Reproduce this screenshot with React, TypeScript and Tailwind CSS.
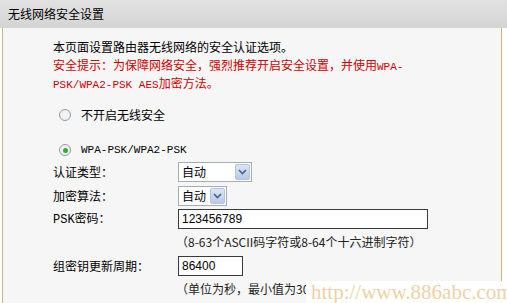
import React from 'react';

const cjk = { fontFamily: '"Noto Sans CJK SC", "Liberation Sans", sans-serif' };
const mono = { fontFamily: '"Liberation Mono", "Noto Sans CJK SC", monospace' };

const Radio: React.FC<{ checked?: boolean }> = ({ checked }) => (
  <span className="w-[12px] h-[12px] rounded-full border border-[#8c9aa8] bg-[#f2f2f2] flex items-center justify-center shrink-0">
    {checked && <span className="w-[5px] h-[5px] rounded-full bg-[#3fa63f]" />}
  </span>
);

const Select: React.FC<{ width: string }> = ({ width }) => (
  <div className={`${width} h-[20px] bg-white border border-[#a5acb5] flex items-stretch`}>
    <span className="flex-1 pl-[3px] text-[12px] leading-[18px] text-black" style={cjk}>自动</span>
    <span className="w-[15px] m-[1px] rounded-[2px] bg-gradient-to-b from-[#dbe6f6] to-[#b7c9e6] border border-[#b1c3de] flex items-center justify-center">
      <svg width="9" height="6" viewBox="0 0 9 6">
        <path d="M1 1 L4.5 4.5 L8 1" stroke="#4d6185" strokeWidth="1.6" fill="none" />
      </svg>
    </span>
  </div>
);

const Input: React.FC<{ width: string; value: string }> = ({ width, value }) => (
  <div className={`${width} h-[20px] bg-white border border-[#3a3a3a] pl-[3px] text-[12px] leading-[18px] text-black`} style={{ fontFamily: '"Liberation Sans", sans-serif' }}>
    {value}
  </div>
);

const App: React.FC = () => {
  return (
    <div className="w-[507px] h-[303px] bg-white relative overflow-hidden text-[12px] text-black" style={cjk}>
      {/* Title bar */}
      <div className="h-[28px] bg-gradient-to-b from-[#e2e2e2] to-[#d4d4d4] flex items-center pl-[8px] text-[12px] text-black">
        无线网络安全设置
      </div>

      {/* Body */}
      <div className="ml-[2px] mr-[5px] h-[275px] border-l border-r border-[#cdb774] bg-[#f6f6f6] pl-[50px] pt-[10px] flex flex-col">
        <div className="h-[18px] leading-[18px]">本页面设置路由器无线网络的安全认证选项。</div>
        <div className="h-[18px] leading-[18px] text-[#d00000]">
          安全提示：为保障网络安全，强烈推荐开启安全设置，并使用<span style={mono} className="text-[11px]">WPA-</span>
        </div>
        <div className="h-[18px] leading-[18px] text-[#d00000]">
          <span style={mono} className="text-[11px]">PSK/WPA2-PSK AES</span>加密方法。
        </div>

        <div className="mt-[14px] h-[18px] flex items-center gap-[10px] pl-[6px]">
          <Radio />
          <span>不开启无线安全</span>
        </div>
        <div className="mt-[17px] h-[18px] flex items-center gap-[10px] pl-[6px]">
          <Radio checked />
          <span style={mono} className="text-[11px]">WPA-PSK/WPA2-PSK</span>
        </div>

        <div className="mt-[2px] h-[22px] flex items-center">
          <span className="w-[125px]">认证类型：</span>
          <Select width="w-[74px]" />
        </div>
        <div className="mt-[2px] h-[22px] flex items-center">
          <span className="w-[125px]">加密算法：</span>
          <Select width="w-[49px]" />
        </div>
        <div className="mt-[1px] h-[22px] flex items-center">
          <span className="w-[125px]">
            <span style={mono} className="text-[12px]">PSK</span>密码：
          </span>
          <Input width="w-[250px]" value="123456789" />
        </div>
        <div className="h-[23px] flex items-center pl-[123px] text-[#222]">
          （8-63个ASCII码字符或8-64个十六进制字符）
        </div>
        <div className="mt-[2px] h-[22px] flex items-center">
          <span className="w-[125px]">组密钥更新周期：</span>
          <Input width="w-[65px]" value="86400" />
        </div>
        <div className="h-[23px] flex items-center pl-[123px] text-[#222] whitespace-nowrap">
          （单位为秒，最小值为30，不更新则为0）
        </div>
      </div>

      {/* Watermark */}
      <div
        className="absolute left-[306px] top-[281px] w-[201px] h-[22px] bg-white pl-[5px] text-[21px] leading-[22px] text-[#ebd3a6]"
        style={{ fontFamily: '"Liberation Serif", serif' }}
      >
        http://www.886abc.com
      </div>
    </div>
  );
};

export default App;
